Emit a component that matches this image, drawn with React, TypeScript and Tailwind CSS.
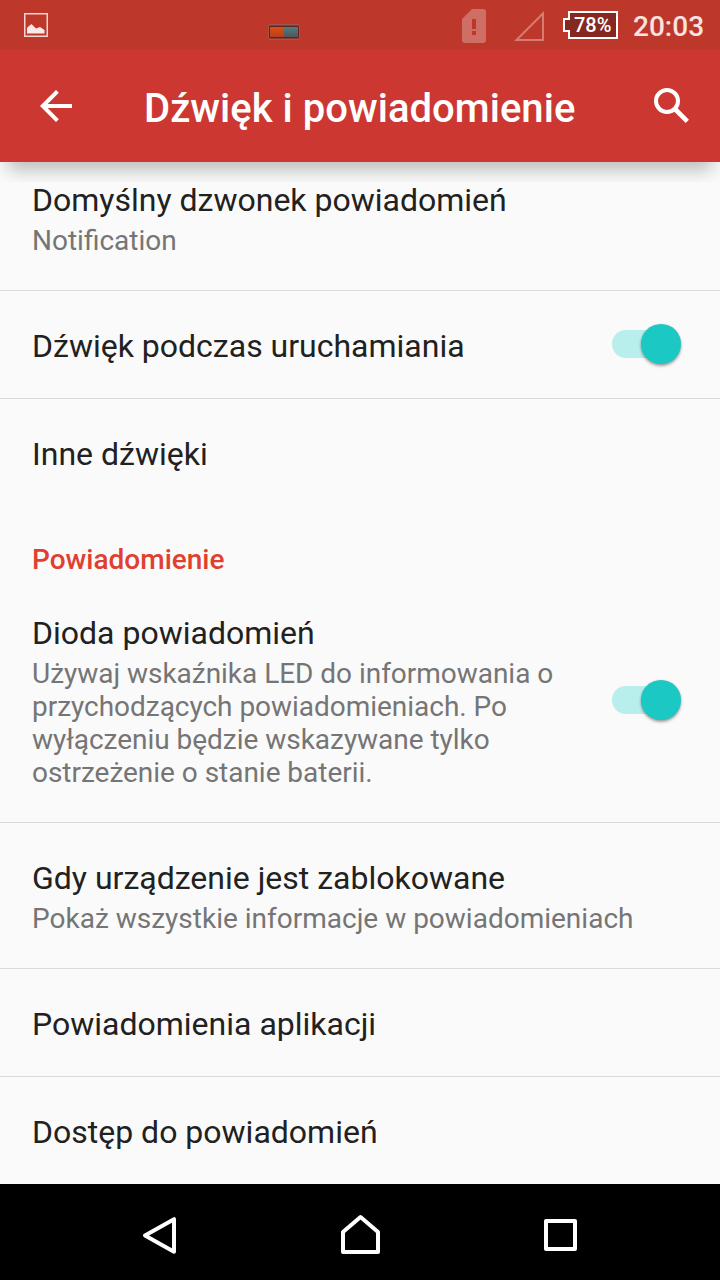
interface Item {
  title: string;
  summary?: string;
  toggle?: boolean;
}

const soundItems: Item[] = [
  { title: "Domyślny dzwonek powiadomień", summary: "Notification" },
  { title: "Dźwięk podczas uruchamiania", toggle: true },
  { title: "Inne dźwięki" },
];

const notificationItems: Item[] = [
  {
    title: "Dioda powiadomień",
    summary:
      "Używaj wskaźnika LED do informowania o przychodzących powiadomieniach. Po wyłączeniu będzie wskazywane tylko ostrzeżenie o stanie baterii.",
    toggle: true,
  },
  { title: "Gdy urządzenie jest zablokowane", summary: "Pokaż wszystkie informacje w powiadomieniach" },
  { title: "Powiadomienia aplikacji" },
  { title: "Dostęp do powiadomień" },
];

const Toggle = () => (
  <div className="relative mb-px mr-[39px] h-10 w-[69px] shrink-0">
    <div className="absolute left-0 top-1.5 h-7 w-14 rounded-full bg-[#b8eeeb]" />
    <div className="absolute right-0 top-0 size-10 rounded-full bg-[#1bc8c4] shadow-[0_2px_3px_rgba(0,0,0,0.35),0_0_2px_rgba(0,0,0,0.12)]" />
  </div>
);

const Row = ({ item, last }: { item: Item; last?: boolean }) => (
  <div className={`flex shrink-0 items-center pl-8 ${last ? "mb-px" : "border-b border-[#dadada]"}`}>
    <div className="flex-1 pb-[33px] pt-9">
      <div className="whitespace-nowrap text-[32px] leading-[38px] text-[#212121]">{item.title}</div>
      {item.summary && (
        <div
          className={`mt-[5px] text-[28px] leading-[33px] text-[#757575] ${
            item.toggle ? "w-[540px] tracking-[-0.03px]" : "whitespace-nowrap"
          }`}
        >
          {item.summary}
        </div>
      )}
    </div>
    {item.toggle && <Toggle />}
  </div>
);

const StatusBar = () => (
  <div className="flex h-[50px] items-start bg-[#bd372b]">
    <svg className="ml-6 mt-[13px]" width="24" height="24" viewBox="0 0 24 24">
      <rect x="0.75" y="0.75" width="22.5" height="22.5" fill="none" stroke="#f3d5d2" strokeWidth="1.5" />
      <path d="M3 20.5V15L5 13L7.5 11L12 15.5L16 14L20.5 17V20.5Z" fill="#f9e9e7" />
    </svg>
    <svg className="ml-[220px] mt-6" width="32" height="16" viewBox="0 0 32 16">
      <defs>
        <linearGradient id="ledOn" x1="0" y1="0" x2="0" y2="1">
          <stop offset="0" stopColor="#dd4e12" />
          <stop offset="1" stopColor="#b8401d" />
        </linearGradient>
        <linearGradient id="ledOff" x1="0" y1="0" x2="0" y2="1">
          <stop offset="0" stopColor="#4c7f83" />
          <stop offset="1" stopColor="#535558" />
        </linearGradient>
      </defs>
      <rect x="0.5" y="0.5" width="31" height="15" rx="1.5" fill="#8b3b35" stroke="#a3564f" />
      <rect x="1" y="2" width="30" height="12" rx="1" fill="#5c2522" />
      <rect x="2" y="3" width="14" height="10" fill="url(#ledOn)" />
      <rect x="16" y="3" width="14" height="10" fill="url(#ledOff)" />
    </svg>
    <svg className="ml-[162px] mt-[9px]" width="24" height="34" viewBox="0 0 24 34">
      <path
        fillRule="evenodd"
        d="M10 0H21Q24 0 24 3V31Q24 34 21 34H3Q0 34 0 31V10ZM10 10V20H14V10ZM10 22V26H14V22Z"
        fill="#cf6e65"
      />
    </svg>
    <svg className="ml-[28px] mt-[11px]" width="30" height="30" viewBox="0 0 30 30">
      <path d="M2.5 29L29 2.5V29Z" fill="none" stroke="#d67c73" strokeWidth="2" />
    </svg>
    <div className="relative ml-[19px] mt-[11px] h-7 w-[55px]">
      <svg width="55" height="28" viewBox="0 0 55 28">
        <path d="M6 1H54V27H6V20H1V8H6Z" fill="#85281f" stroke="#fff" strokeWidth="2" />
      </svg>
      <span className="absolute left-[11px] top-[2px] text-[20px] font-medium leading-6 text-white">78%</span>
    </div>
    <span className="ml-[15px] mt-[10px] text-[28px] font-medium leading-[34px] text-[#f8e3e1]">20:03</span>
  </div>
);

const Toolbar = () => (
  <div className="flex h-28 items-center bg-[#cc3831]">
    <svg className="ml-10" width="32" height="32" viewBox="0 0 32 32">
      <path d="M32 16H3M17.4 1.4L2.8 16L17.4 30.6" fill="none" stroke="#fff" strokeWidth="4" />
    </svg>
    <h1 className="flex-1 whitespace-nowrap pl-[72px] pt-1 text-[40px] font-medium leading-[47px] tracking-[0.03px] text-white">
      Dźwięk i powiadomienie
    </h1>
    <svg className="mb-0.5 mr-[31px]" width="35" height="35" viewBox="0 0 35 35">
      <circle cx="13" cy="13" r="11" fill="none" stroke="#fff" strokeWidth="4" />
      <path d="M21 21L33.3 33.3" stroke="#fff" strokeWidth="4.6" />
    </svg>
  </div>
);

const NavBar = () => (
  <div className="flex h-24 shrink-0 items-start bg-black">
    <svg className="ml-[142px] mt-8" width="36" height="40" viewBox="0 0 36 40" fill="none" stroke="#fff" strokeWidth="4" strokeLinejoin="round">
      <path d="M32 3.2V35.8L3 19.5Z" />
    </svg>
    <svg className="ml-[162px] mt-[30px]" width="42" height="41" viewBox="0 0 42 41" fill="none" stroke="#fff" strokeWidth="4" strokeLinejoin="round">
      <path d="M3 38V18L20.5 3L38 18V38Z" />
    </svg>
    <svg className="ml-[161px] mt-[34px]" width="35" height="35" viewBox="0 0 35 35" fill="none" stroke="#fff" strokeWidth="4" strokeLinejoin="round">
      <rect x="3" y="3" width="29" height="28" />
    </svg>
  </div>
);

export default function App() {
  return (
    <div className="flex h-[1280px] w-[720px] flex-col overflow-hidden bg-[#fafafa] font-['Roboto',sans-serif]">
      <header className="relative z-10 shrink-0">
        <StatusBar />
        <Toolbar />
        {/* toolbar shadow, fading towards both corners */}
        <div className="absolute inset-x-0 top-full h-5 overflow-hidden">
          <div className="absolute inset-x-2 -top-10 h-10 shadow-[0_8px_18px_rgba(0,0,0,0.25)]" />
        </div>
      </header>

      <main className="flex h-[1022px] shrink-0 flex-col overflow-hidden">
        <div className="-mt-[17px] flex flex-col">
          {soundItems.map((item, i) => (
            <Row key={item.title} item={item} last={i === soundItems.length - 1} />
          ))}
        </div>
        <h2 className="flex h-[71px] shrink-0 items-center pl-8 pt-[34px] text-[28px] font-medium leading-[33px] text-[#e04030]">
          Powiadomienie
        </h2>
        <div className="flex flex-col">
          {notificationItems.map((item, i) => (
            <Row key={item.title} item={item} last={i === notificationItems.length - 1} />
          ))}
        </div>
      </main>

      <NavBar />
    </div>
  );
}
